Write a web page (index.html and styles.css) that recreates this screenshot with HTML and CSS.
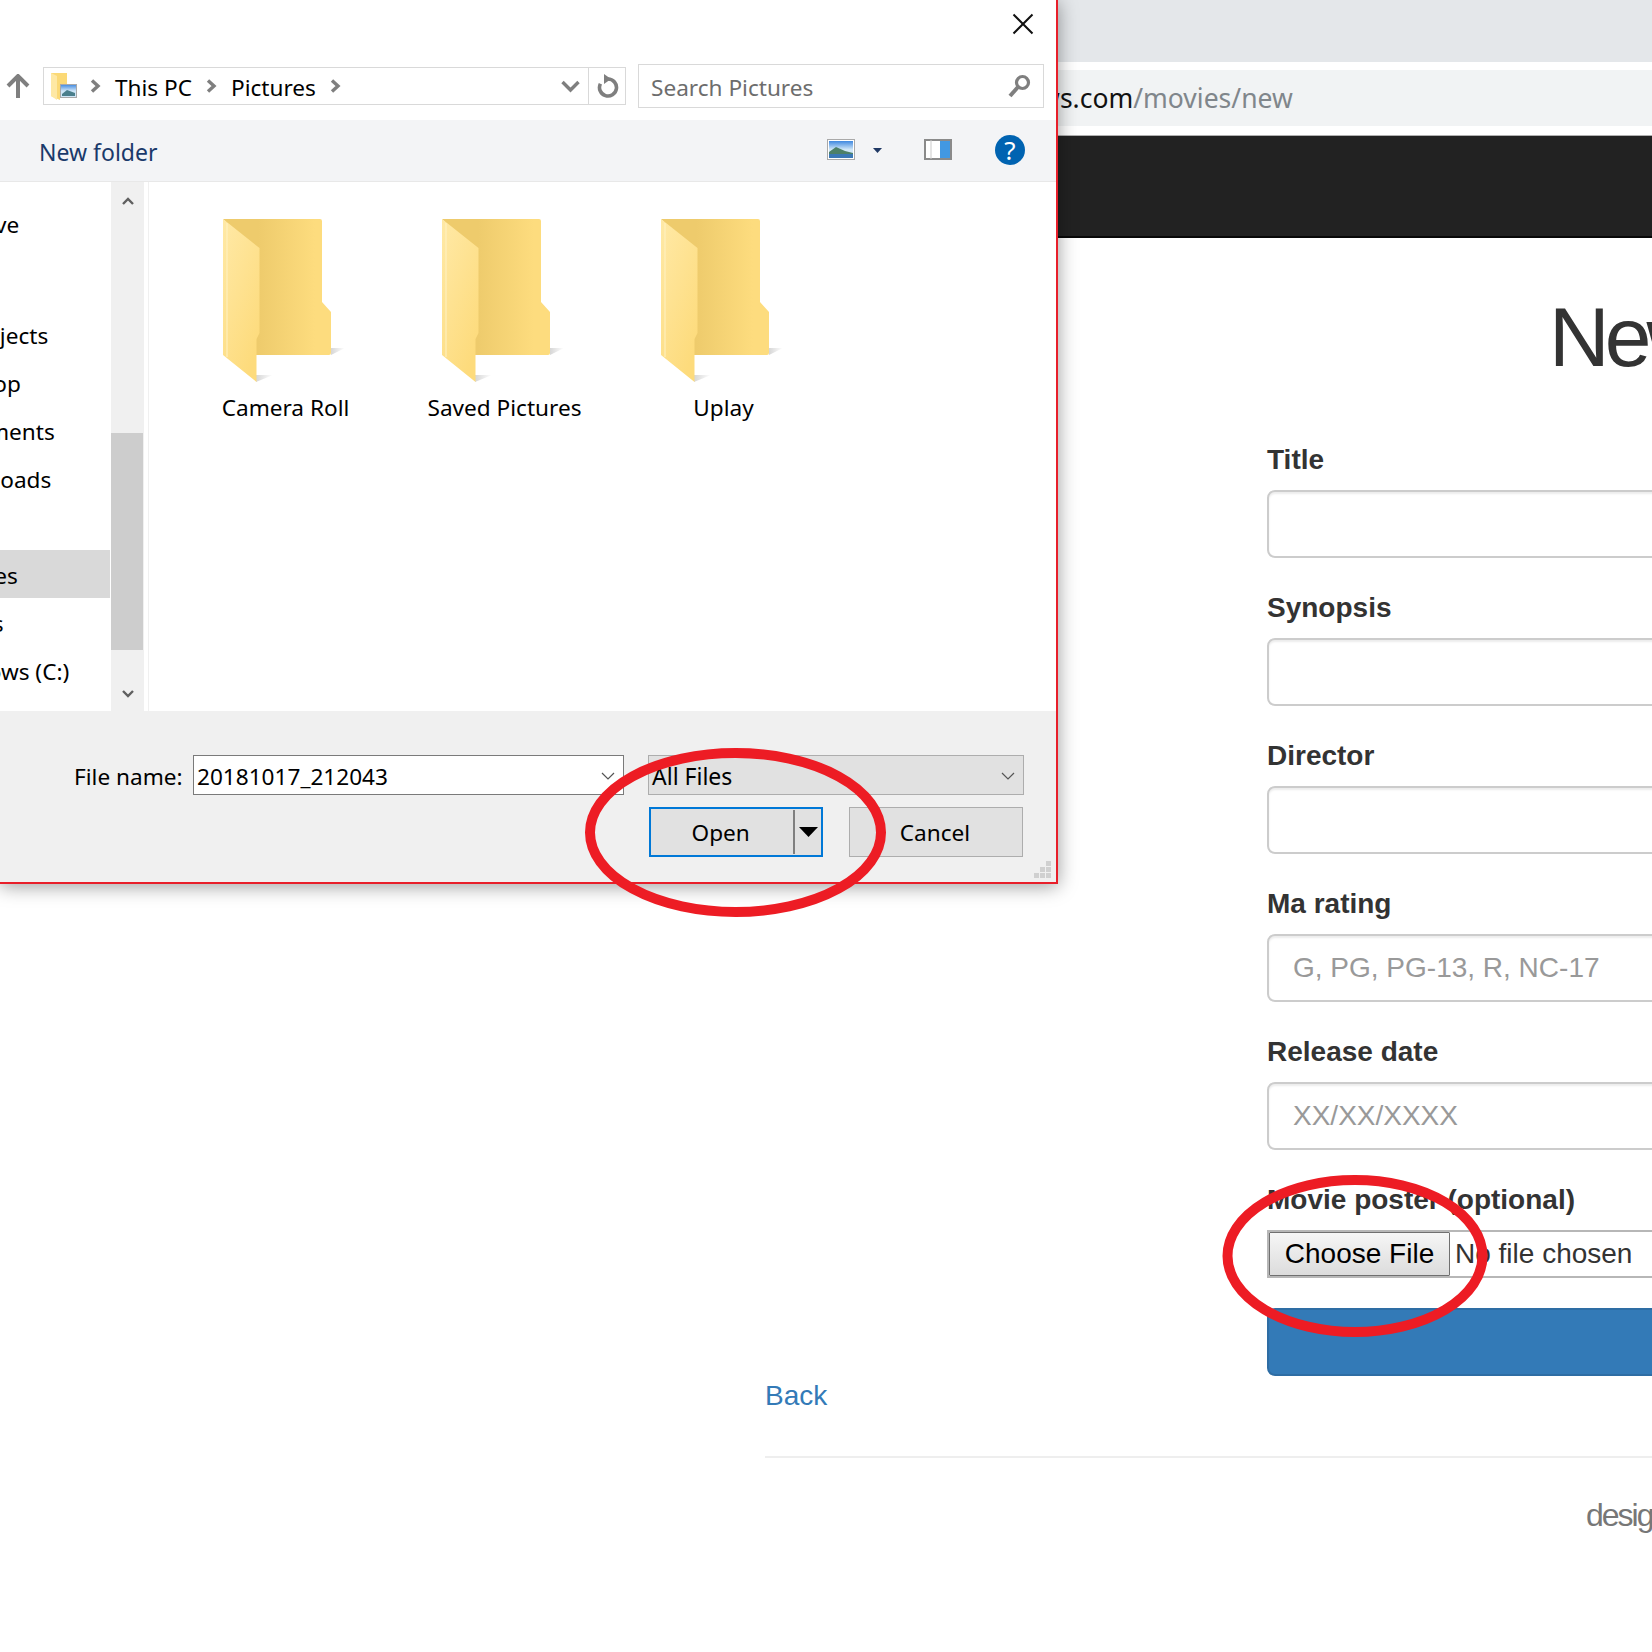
FILE: index.html
```html
<!DOCTYPE html>
<html lang="en">
<head>
  <meta charset="UTF-8" />
  <title>New Movie</title>
  <link rel="stylesheet" href="styles.css">
</head>
<body>
  <svg class="defs" width="0" height="0">
    <defs>
      <linearGradient id="folderBack" x1="0" x2="1" y1="0" y2="0">
        <stop offset="0.33" stop-color="#eecb6c" />
        <stop offset="0.85" stop-color="#fddc7e" />
      </linearGradient>
      <linearGradient id="folderFront" x1="0" x2="0.6" y1="0" y2="1">
        <stop offset="0" stop-color="#ffe9a6" />
        <stop offset="1" stop-color="#fddb7c" />
      </linearGradient>
      <linearGradient id="folderShadow" x1="0" x2="1" y1="0" y2="0">
        <stop offset="0" stop-color="#d6d6d6" />
        <stop offset="1" stop-color="#ffffff" />
      </linearGradient>
      <linearGradient id="sky" x1="0" x2="0" y1="0" y2="1">
        <stop offset="0" stop-color="#3f88e0" />
        <stop offset="0.5" stop-color="#cfe6f7" />
      </linearGradient>
      <symbol id="folder" viewBox="0 0 125 170">
        <path d="M33 163 L50 156 H33 Z" fill="url(#folderShadow)" />
        <path d="M108 136 L122 129 H108 Z" fill="url(#folderShadow)" />
        <path d="M0 0 H97 Q99 0 99 2 V83 L108 93 V134 Q108 136 106 136 H30 L30 30 Z" fill="url(#folderBack)" />
        <path d="M0 0 L36.5 29 V114 L33.5 120 V163 L0 136 Z" fill="url(#folderFront)" />
        <path d="M4 4 V138" stroke="#fff2c4" stroke-width="1" fill="none" />
      </symbol>
    </defs>
  </svg>

  <div class="browser">
    <div class="tab-strip"></div>
    <div class="url-bar"><span class="url-host">moviereviews.com</span><span class="url-path">/movies/new</span></div>
    <div class="navbar"></div>
    <main class="content">
      <h1 class="page-title">New Movie</h1>
      <form class="movie-form">
        <div class="form-group">
          <label class="form-label">Title</label>
          <input class="form-input" type="text">
        </div>
        <div class="form-group">
          <label class="form-label">Synopsis</label>
          <input class="form-input" type="text">
        </div>
        <div class="form-group">
          <label class="form-label">Director</label>
          <input class="form-input" type="text">
        </div>
        <div class="form-group">
          <label class="form-label">Ma rating</label>
          <input class="form-input" type="text" placeholder="G, PG, PG-13, R, NC-17">
        </div>
        <div class="form-group">
          <label class="form-label">Release date</label>
          <input class="form-input" type="text" placeholder="XX/XX/XXXX">
        </div>
        <div class="form-group">
          <label class="form-label">Movie poster (optional)</label>
          <div class="file-field">
            <span class="file-button">Choose File</span>
            <span class="file-status">No file chosen</span>
          </div>
        </div>
        <div class="submit-button"></div>
      </form>
      <a class="back-link">Back</a>
      <div class="rule"></div>
      <div class="credit">designed by</div>
    </main>
  </div>

  <div class="dialog">
    <div class="title-bar">
      <svg class="close-icon" width="22" height="22" viewBox="0 0 22 22"><path d="M1.5 1.5 L20.5 20.5 M20.5 1.5 L1.5 20.5" stroke="#111" stroke-width="2" fill="none" /></svg>
    </div>

    <div class="path-row">
      <svg class="up-icon" width="24" height="24" viewBox="0 0 24 24"><path d="M12 24 V3 M2 12 L12 2 L22 12" stroke="#7f7f7f" stroke-width="4" fill="none" /></svg>
      <div class="address-box">
        <svg class="address-folder" width="26" height="27" viewBox="0 0 26 27">
          <path d="M0 0 H16 V12 H9 V27 L0 23 Z" fill="#fbd976" />
          <path d="M0 0 L6 3 V27 L0 23 Z" fill="#fee8a4" />
          <rect x="9.5" y="11.5" width="16" height="13" fill="url(#sky)" stroke="#a9a9a9" />
          <path d="M11 21 L16 17 L24 20 V23 H11 Z" fill="#4a7f8c" />
        </svg>
        <svg class="crumb-chevron first" width="11" height="14" viewBox="0 0 11 14"><path d="M2 1.5 L8 7 L2 12.5" stroke="#7f7f7f" stroke-width="3.4" fill="none" /></svg>
        <span class="crumb">This PC</span>
        <svg class="crumb-chevron" width="11" height="14" viewBox="0 0 11 14"><path d="M2 1.5 L8 7 L2 12.5" stroke="#7f7f7f" stroke-width="3.4" fill="none" /></svg>
        <span class="crumb">Pictures</span>
        <svg class="crumb-chevron" width="11" height="14" viewBox="0 0 11 14"><path d="M2 1.5 L8 7 L2 12.5" stroke="#7f7f7f" stroke-width="3.4" fill="none" /></svg>
        <svg class="address-down" width="19" height="13" viewBox="0 0 19 13"><path d="M1.5 2 L9.5 10 L17.5 2" stroke="#7f7f7f" stroke-width="3.4" fill="none" /></svg>
        <div class="refresh-cell">
          <svg width="22" height="25" viewBox="0 0 22 25"><path d="M11 5 A8.5 8.5 0 1 1 3.4 9.7" stroke="#7f7f7f" stroke-width="3.6" fill="none" /><path d="M7 0 L14 5 L7 10 Z" fill="#7f7f7f" /></svg>
        </div>
      </div>
      <div class="search-box">
        <span class="search-text">Search Pictures</span>
        <svg class="search-icon" width="23" height="24" viewBox="0 0 23 24"><circle cx="14.5" cy="8.5" r="6" stroke="#7f7f7f" stroke-width="3.2" fill="none" /><path d="M10 13 L2 22" stroke="#7f7f7f" stroke-width="4" fill="none" /></svg>
      </div>
    </div>

    <div class="tool-bar">
      <span class="new-folder">New folder</span>
      <svg class="view-icon" width="28" height="21" viewBox="0 0 28 21">
        <rect x="0.5" y="0.5" width="27" height="20" fill="#fff" stroke="#a9a9a9" />
        <rect x="2" y="2" width="24" height="17" fill="url(#sky)" />
        <path d="M2 13 L9 8 L18 12 L26 14 V15 H2 Z" fill="#4d8068" />
        <rect x="2" y="15" width="24" height="4" fill="#3b78b5" />
      </svg>
      <svg class="view-caret" width="9" height="5" viewBox="0 0 9 5"><path d="M0 0 H9 L4.5 5 Z" fill="#1f3864" /></svg>
      <svg class="pane-icon" width="28" height="21" viewBox="0 0 28 21">
        <rect x="1" y="1" width="26" height="19" fill="#fff" stroke="#8a8a8a" stroke-width="2" />
        <path d="M7 1 V20" stroke="#c9c9c9" />
        <rect x="16" y="2" width="10" height="17" fill="#4298e2" />
      </svg>
      <span class="help-badge">?</span>
    </div>

    <div class="panes">
      <div class="nav-pane">
        <div class="nav-row"><span class="nav-label top-label">OneDrive</span></div>
        <div class="nav-row gap-row"><span class="nav-label">3D Objects</span></div>
        <div class="nav-row"><span class="nav-label">Desktop</span></div>
        <div class="nav-row"><span class="nav-label">Documents</span></div>
        <div class="nav-row"><span class="nav-label">Downloads</span></div>
        <div class="nav-row"></div>
        <div class="nav-row selected"><span class="nav-label">Pictures</span></div>
        <div class="nav-row"><span class="nav-label">Videos</span></div>
        <div class="nav-row"><span class="nav-label">Windows (C:)</span></div>
      </div>
      <div class="scrollbar">
        <div class="scroll-btn up"><svg width="12" height="8" viewBox="0 0 12 8"><path d="M1 7 L6 2 L11 7" stroke="#606060" stroke-width="2.4" fill="none" /></svg></div>
        <div class="scroll-thumb"></div>
        <div class="scroll-btn down"><svg width="12" height="8" viewBox="0 0 12 8"><path d="M1 1 L6 6 L11 1" stroke="#606060" stroke-width="2.4" fill="none" /></svg></div>
      </div>
      <div class="files-pane">
        <div class="file-item">
          <svg class="folder-icon" width="125" height="170"><use href="#folder" /></svg>
          <span class="file-label">Camera Roll</span>
        </div>
        <div class="file-item">
          <svg class="folder-icon" width="125" height="170"><use href="#folder" /></svg>
          <span class="file-label">Saved Pictures</span>
        </div>
        <div class="file-item">
          <svg class="folder-icon" width="125" height="170"><use href="#folder" /></svg>
          <span class="file-label">Uplay</span>
        </div>
      </div>
    </div>

    <div class="dialog-footer">
      <div class="name-row">
        <span class="name-label">File name:</span>
        <div class="name-input">
          <span>20181017_212043</span>
          <svg width="14" height="8" viewBox="0 0 14 8"><path d="M1 1 L7 7 L13 1" stroke="#555" stroke-width="1.2" fill="none" /></svg>
        </div>
        <div class="type-select">
          <span class="type-text">All Files</span>
          <svg width="14" height="8" viewBox="0 0 14 8"><path d="M1 1 L7 7 L13 1" stroke="#555" stroke-width="1.2" fill="none" /></svg>
        </div>
      </div>
      <div class="button-row">
        <div class="open-button">
          <span class="open-text">Open</span>
          <span class="open-arrow"><svg width="19" height="10" viewBox="0 0 19 10"><path d="M0 0 H19 L9.5 10 Z" fill="#000" /></svg></span>
        </div>
        <div class="cancel-button">Cancel</div>
      </div>
      <svg class="grip" width="17" height="17" viewBox="0 0 17 17">
        <path d="M12 0h5v5h-5z M6 6h5v5H6z M12 6h5v5h-5z M0 12h5v5H0z M6 12h5v5H6z M12 12h5v5h-5z" fill="#d0d0d0" />
      </svg>
    </div>
  </div>

  <svg class="marks" width="1652" height="1652" viewBox="0 0 1652 1652">
    <ellipse cx="735.5" cy="832.5" rx="145.5" ry="79.5" fill="none" stroke="#ed1c24" stroke-width="10" />
    <ellipse cx="1355" cy="1256" rx="127.5" ry="76" fill="none" stroke="#ed1c24" stroke-width="10" />
  </svg>
</body>
</html>
```

FILE: styles.css
```css
html, body {
  margin: 0;
  height: 1652px;
  overflow: hidden;
  background: #fff;
}

body {
  position: relative;
  font-family: "Liberation Sans", Arial, sans-serif;
  color: #333;
}

.defs {
  position: absolute;
}

/* browser page behind the dialog */
.browser {
  width: 1652px;
  height: 1652px;
  overflow: hidden;
}

.tab-strip {
  height: 62px;
  background: #e4e7ea;
}

.url-bar {
  height: 56px;
  margin-top: 8px;
  background: #f1f3f4;
  display: flex;
  align-items: center;
  padding-left: 904px;
  font-family: "Noto Sans", sans-serif;
  font-size: 26.5px;
  white-space: nowrap;
}

.url-host {
  color: #111;
}

.url-path {
  color: #80868b;
}

.navbar {
  height: 100px;
  margin-top: 9px;
  background: #222;
  border-top: 1px solid #b0b0b0;
  border-bottom: 2px solid #080808;
}

.content {
  padding-left: 765px;
}

.page-title {
  margin: 53px 0 57px;
  padding-left: 784px;
  font-size: 84px;
  font-weight: 400;
  line-height: 92px;
  letter-spacing: -5px;
  white-space: nowrap;
}

.movie-form {
  margin-left: 502px;
  width: 700px;
}

.form-group {
  margin-bottom: 30px;
}

.form-label {
  display: block;
  margin-bottom: 10px;
  font-size: 28px;
  font-weight: 700;
  line-height: 40px;
  white-space: nowrap;
}

.form-input {
  display: block;
  box-sizing: border-box;
  width: 100%;
  height: 68px;
  padding: 12px 24px;
  border: 2px solid #ccc;
  border-radius: 8px;
  box-shadow: inset 0 2px 2px rgba(0, 0, 0, .075);
  font-family: "Liberation Sans", Arial, sans-serif;
  font-size: 28px;
  color: #555;
}

.form-input::placeholder {
  color: #999;
  opacity: 1;
}

.file-field {
  display: flex;
  align-items: center;
  box-sizing: border-box;
  height: 48px;
  border: 2px solid #b7b7b7;
  background: #fff;
}

.file-button {
  box-sizing: border-box;
  width: 181px;
  height: 44px;
  line-height: 41px;
  text-align: center;
  border: 1px solid #707070;
  border-radius: 1px;
  background: linear-gradient(#f6f6f6, #dcdcdc);
  font-size: 28px;
  color: #000;
}

.file-status {
  margin-left: 5px;
  font-size: 28px;
}

.submit-button {
  box-sizing: border-box;
  height: 68px;
  background: #337ab7;
  border: 2px solid #2e6da4;
  border-radius: 8px;
}

.back-link {
  display: block;
  font-size: 28px;
  line-height: 40px;
  color: #337ab7;
}

.rule {
  height: 2px;
  margin-top: 40px;
  background: #eee;
}

.credit {
  margin-top: 37px;
  padding-left: 821px;
  font-size: 32px;
  line-height: 40px;
  letter-spacing: -2px;
  color: #777;
  white-space: nowrap;
}

/* file dialog window */
.dialog {
  position: absolute;
  left: 0;
  top: 0;
  width: 1058px;
  height: 884px;
  box-sizing: border-box;
  display: flex;
  flex-direction: column;
  background: #fff;
  border-right: 2px solid #e81f2a;
  border-bottom: 2px solid #e81f2a;
  box-shadow: 0 2px 18px rgba(0, 0, 0, .4);
  font-family: "Noto Sans", sans-serif;
  font-size: 22.6px;
  color: #000;
  overflow: hidden;
}

.title-bar {
  height: 64px;
  position: relative;
}

.close-icon {
  position: absolute;
  right: 22px;
  top: 13px;
}

.path-row {
  height: 44px;
  display: flex;
  align-items: center;
  padding-left: 6px;
  margin-bottom: 12px;
}

.up-icon {
  margin-right: 13px;
  flex: none;
}

.address-box {
  box-sizing: border-box;
  width: 583px;
  height: 38px;
  display: flex;
  align-items: center;
  border: 1px solid #d9d9d9;
  padding-left: 7px;
}

.address-folder {
  margin-right: 13px;
  flex: none;
}

.crumb-chevron {
  flex: none;
  margin: 0 14px;
}

.crumb-chevron.first {
  margin-left: 0;
}

.crumb {
  padding-top: 2px;
  white-space: nowrap;
}

.address-down {
  margin-left: auto;
  margin-right: 8px;
  flex: none;
}

.refresh-cell {
  width: 37px;
  height: 36px;
  padding-left: 2px;
  box-sizing: border-box;
  display: flex;
  align-items: center;
  justify-content: center;
  border-left: 1px solid #d9d9d9;
}

.search-box {
  box-sizing: border-box;
  width: 406px;
  height: 44px;
  margin-left: 12px;
  display: flex;
  align-items: center;
  justify-content: space-between;
  border: 1px solid #d9d9d9;
  padding: 0 12px;
}

.search-text {
  padding-top: 2px;
  color: #6d6d6d;
}

.tool-bar {
  box-sizing: border-box;
  height: 62px;
  display: flex;
  align-items: center;
  padding-left: 39px;
  background: #f3f4f6;
  border-bottom: 1px solid #e8e8e8;
}

.new-folder {
  padding-top: 2px;
  font-size: 23px;
  color: #1a3a6b;
  margin-right: auto;
}

.view-icon {
  flex: none;
  margin-bottom: 2px;
}

.view-caret {
  flex: none;
  margin: 0 42px 0 18px;
}

.pane-icon {
  flex: none;
  margin-right: 43px;
  margin-bottom: 2px;
}

.help-badge {
  width: 30px;
  height: 30px;
  margin-right: 31px;
  margin-bottom: 2px;
  border-radius: 50%;
  background: #0063b1;
  color: #fff;
  font-size: 26px;
  line-height: 30px;
  text-align: center;
}

.panes {
  height: 529px;
  display: flex;
}

.nav-pane {
  width: 110px;
  padding-top: 17px;
  box-sizing: border-box;
  overflow: hidden;
  flex: none;
}

.nav-row {
  height: 48px;
  line-height: 52px;
  white-space: nowrap;
}

.gap-row {
  margin-top: 63px;
}

.nav-row.selected {
  background: #d9d9d9;
}

.nav-label {
  display: inline-block;
  margin-left: -67px;
}

.top-label {
  margin-left: -81px;
}

.scrollbar {
  width: 33px;
  margin-left: 1px;
  display: flex;
  flex-direction: column;
  background: #f0f0f0;
  flex: none;
}

.scroll-btn {
  display: flex;
  justify-content: center;
  align-items: center;
}

.scroll-btn.up {
  height: 38px;
}

.scroll-btn.down {
  height: 34px;
  margin-top: auto;
}

.scroll-thumb {
  height: 217px;
  width: 32px;
  margin-top: 213px;
  background: #cdcdcd;
}

.files-pane {
  flex: 1;
  display: flex;
  align-items: flex-start;
  margin-left: 4px;
  padding-left: 27px;
  padding-top: 37px;
  border-left: 1px solid #f0f0f0;
}

.file-item {
  width: 219px;
  display: flex;
  flex-direction: column;
  align-items: center;
}

.file-label {
  margin-top: 3px;
  white-space: nowrap;
}

.dialog-footer {
  flex: 1;
  position: relative;
  background: #f0f0f0;
  padding-top: 44px;
}

.name-row {
  display: flex;
  align-items: center;
  padding-left: 74px;
}

.name-label {
  width: 119px;
  padding-top: 2px;
}

.name-input,
.type-select {
  box-sizing: border-box;
  height: 40px;
  display: flex;
  align-items: center;
  justify-content: space-between;
  padding: 2px 8px 0 3px;
}

.name-input {
  width: 431px;
  background: #fff;
  border: 1px solid #7a7a7a;
}

.type-select {
  width: 376px;
  margin-left: 24px;
  background: #e1e1e1;
  border: 1px solid #adadad;
}

.type-text {
  font-size: 23px;
}

.button-row {
  display: flex;
  margin: 12px 0 0 649px;
}

.open-button {
  box-sizing: border-box;
  width: 174px;
  height: 50px;
  display: flex;
  background: #e1e1e1;
  border: 2px solid #0078d7;
}

.open-text {
  width: 144px;
  padding-right: 3px;
  box-sizing: border-box;
  line-height: 48px;
  text-align: center;
}

.open-arrow {
  width: 26px;
  margin: 1px 0;
  display: flex;
  align-items: center;
  justify-content: center;
  border-left: 2px solid #7f7f7f;
}

.cancel-button {
  box-sizing: border-box;
  width: 174px;
  height: 50px;
  margin-left: 26px;
  padding-right: 2px;
  line-height: 50px;
  text-align: center;
  background: #e1e1e1;
  border: 1px solid #adadad;
}

.grip {
  position: absolute;
  right: 5px;
  bottom: 4px;
}

/* hand drawn circles over everything */
.marks {
  position: absolute;
  left: 0;
  top: 0;
  pointer-events: none;
}
```
